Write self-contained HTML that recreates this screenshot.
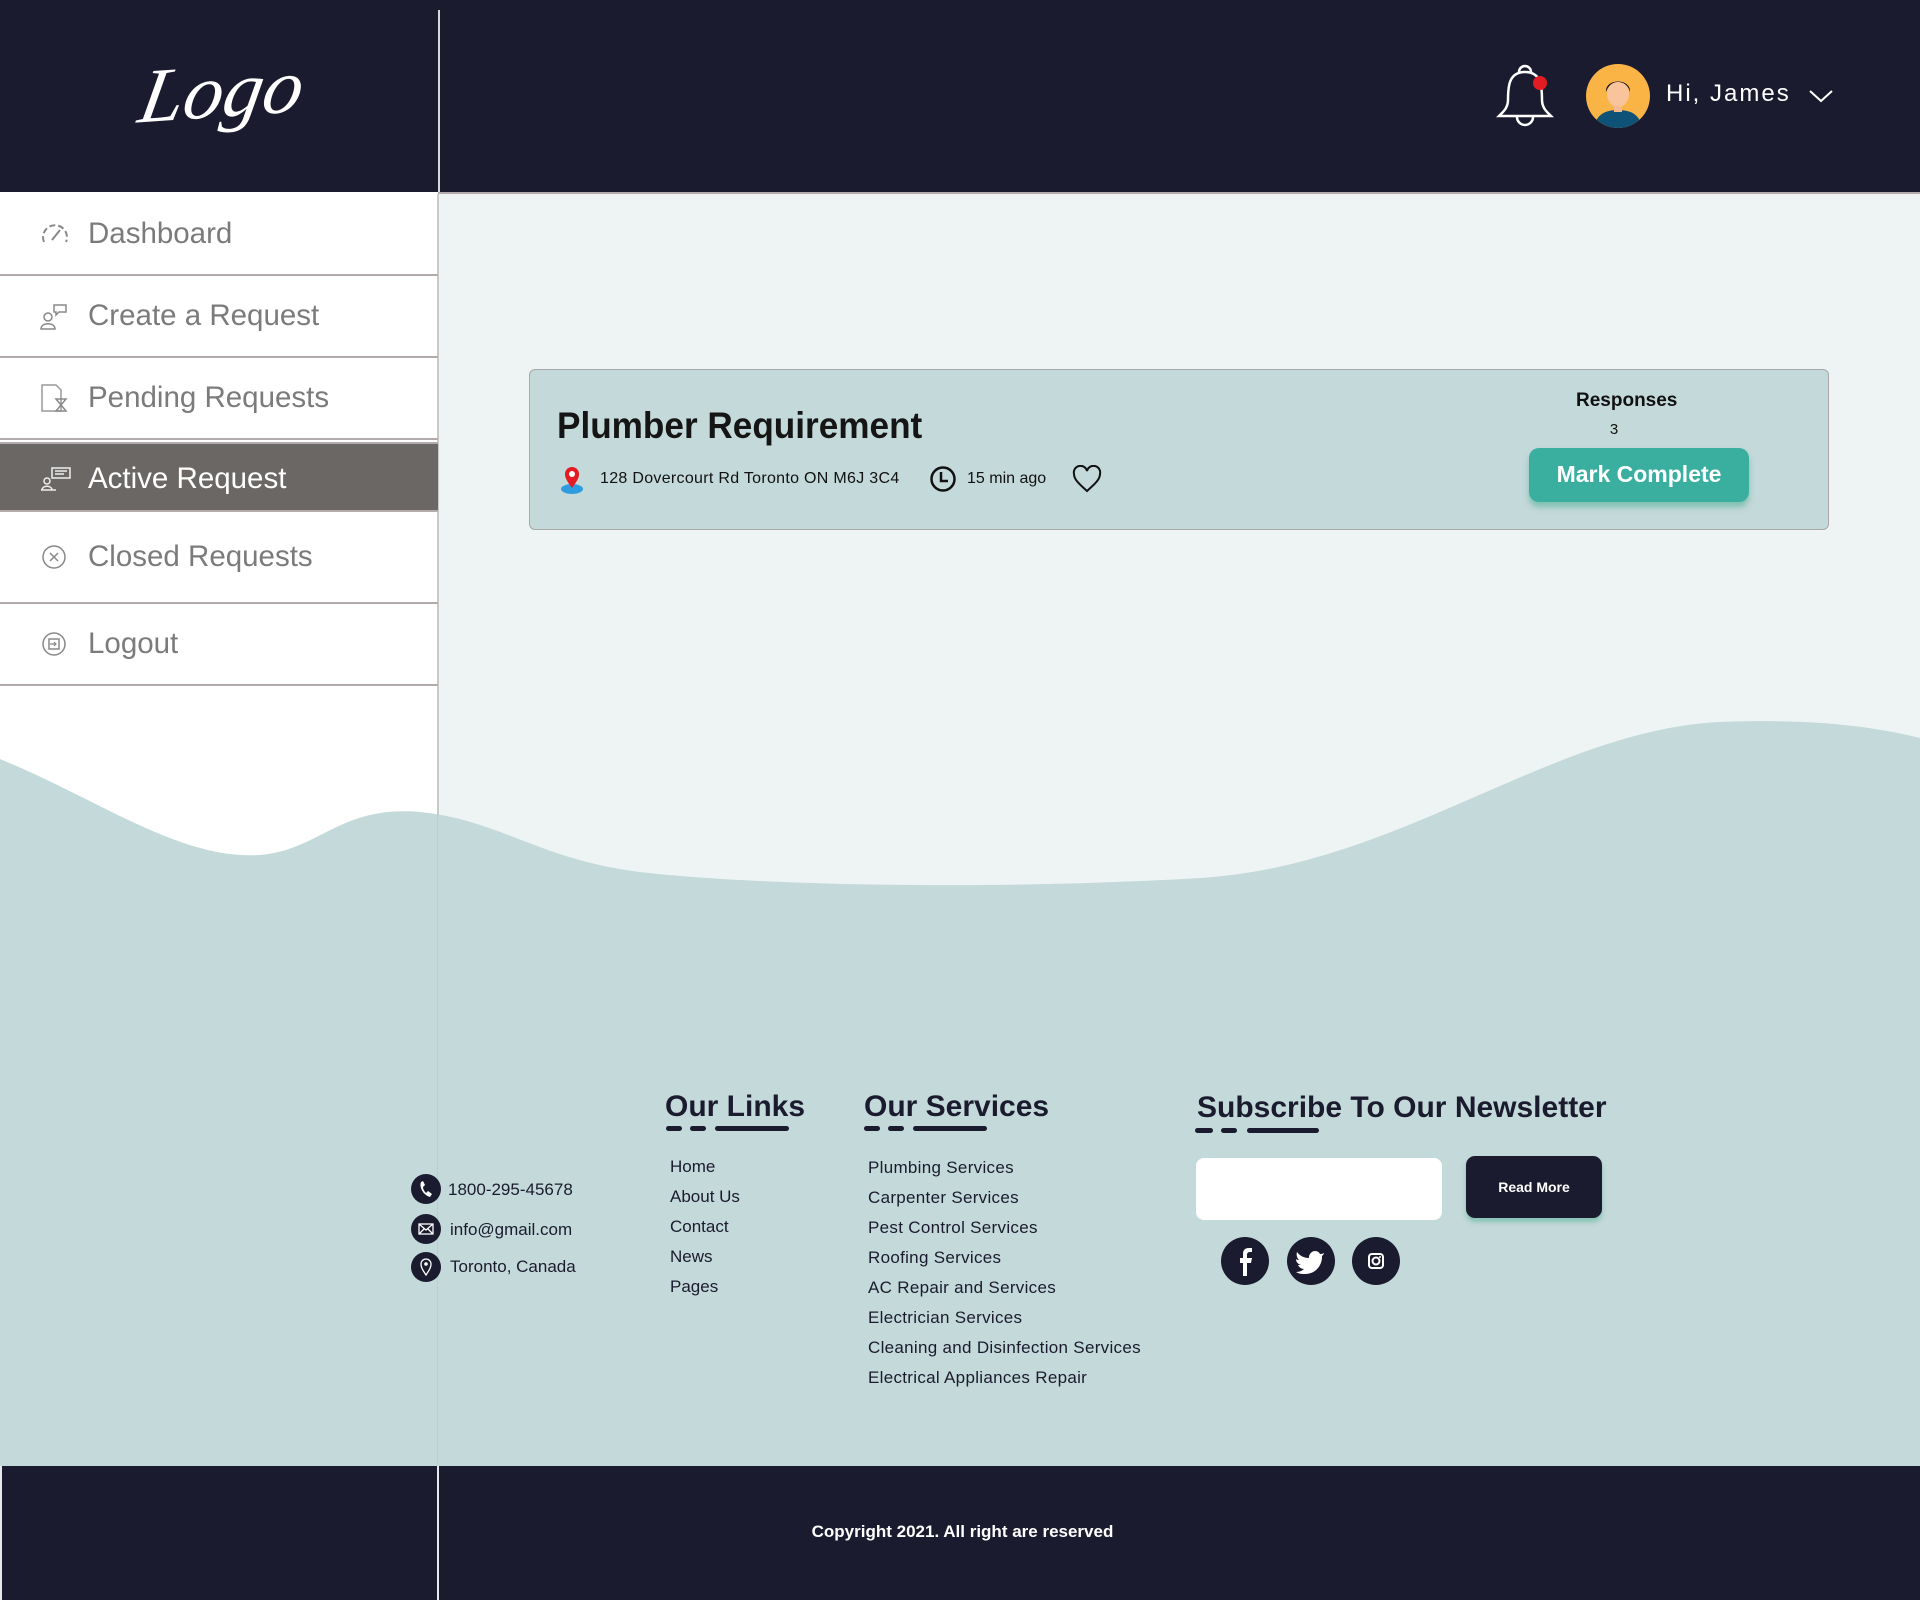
<!DOCTYPE html>
<html><head><meta charset="utf-8">
<style>
*{margin:0;padding:0;box-sizing:border-box}
body{width:1920px;height:1600px;position:relative;overflow:hidden;background:#eef4f3;font-family:"Liberation Sans",sans-serif}
.abs{position:absolute}
#hdr{left:0;top:0;width:1920px;height:192px;background:#1a1b2e}
#side{left:0;top:192px;width:438px;height:700px;background:#fff}
.vl{position:absolute;left:437px;width:2px;background:#c9c9c9}
.item{position:absolute;left:0;width:438px;border-bottom:2px solid #b4acac;color:#7b7b7b;font-size:29.5px;display:flex;align-items:center}
.item span{position:absolute;left:88px}
.item svg{position:absolute;left:40px}
.ft{color:#1a1b2e;font-size:17px;position:absolute}
.h{font-size:30px;font-weight:bold;color:#1a1b2e;position:absolute}
.dash{position:absolute;height:5px;background:#1a1b2e;border-radius:3px}
</style></head><body>
<div id="hdr" class="abs"></div>
<div class="abs" style="left:438px;top:10px;width:2px;height:182px;background:#d8d8d8"></div>
<div class="abs" style="left:0;top:192px;width:1920px;height:2px;background:#b4acac"></div>
<div class="abs" style="left:142px;top:46px;color:#fff;font-family:'URW Chancery L','Z003','Liberation Serif',serif;font-style:italic;font-size:78px;transform:skewX(-14deg) rotate(-4deg)">Logo</div>

<svg class="abs" style="left:1495px;top:62px" width="60" height="70" viewBox="0 0 60 70"><path d="M24 10 a6 6 0 0 1 12 0" fill="none" stroke="#fff" stroke-width="2.5"/><path d="M30 10 C14 10 13 24 13 38 C13 46 8 50 4 54 L56 54 C52 50 47 46 47 38 C47 24 46 10 30 10Z" fill="none" stroke="#fff" stroke-width="2.5"/><path d="M22 55 a8 8 0 0 0 16 0" fill="none" stroke="#fff" stroke-width="2.5"/><circle cx="45" cy="21" r="7" fill="#e31b23"/></svg>
<svg class="abs" style="left:1586px;top:64px" width="64" height="64" viewBox="0 0 64 64"><defs><clipPath id="c"><circle cx="32" cy="32" r="32"/></clipPath></defs><circle cx="32" cy="32" r="32" fill="#f9b445"/><g clip-path="url(#c)"><path d="M8 64 C10 50 20 46 32 46 C44 46 54 50 56 64Z" fill="#0f5278"/><rect x="28" y="38" width="8" height="10" fill="#f5b88f"/><ellipse cx="32" cy="30" rx="11" ry="13" fill="#f9c39b"/><path d="M20 28 C19 14 45 14 44 28 C42 20 36 18 32 18 C26 18 22 22 20 28Z" fill="#111"/></g></svg>
<div class="abs" style="left:1666px;top:80px;color:#fff;font-size:24px;letter-spacing:2px">Hi, James</div>
<svg class="abs" style="left:1808px;top:88px" width="26" height="16"><path d="M2 3 L13 13 L24 3" fill="none" stroke="#fff" stroke-width="2"/></svg>

<div id="side" class="abs"></div>
<div class="vl" style="top:194px;height:1272px"></div>
<div class="item" style="top:194px;height:82px"><svg width="30" height="24" viewBox="0 0 30 24"><path d="M4 20 A12 12 0 1 1 26 20" fill="none" stroke="#888" stroke-width="2" stroke-dasharray="6 3"/><path d="M12 18 L20 8" stroke="#888" stroke-width="2"/></svg><span>Dashboard</span></div>
<div class="item" style="top:276px;height:82px"><svg width="30" height="28" viewBox="0 0 30 28"><circle cx="8" cy="15" r="4" fill="none" stroke="#888" stroke-width="1.5"/><path d="M1 27 C1 20 15 20 15 27Z" fill="none" stroke="#888" stroke-width="1.5"/><path d="M14 3 H26 V10 H19 L16 13 V10 H14Z" fill="none" stroke="#888" stroke-width="1.5"/></svg><span>Create a Request</span></div>
<div class="item" style="top:358px;height:82px"><svg width="30" height="30" viewBox="0 0 30 30"><path d="M2 2 H16 L21 7 V28 H2Z" fill="none" stroke="#999" stroke-width="1.5"/><path d="M16 16 H26 L21 22 L26 28 H16 L21 22Z" fill="none" stroke="#888" stroke-width="1.5"/></svg><span>Pending Requests</span></div>
<div class="item" style="top:442px;height:70px;background:#6b6765;color:#fff;border-top:2px solid #b4acac;padding-top:4px"><svg width="32" height="26" viewBox="0 0 32 26"><path d="M12 2 H30 V12 H12Z" fill="none" stroke="#eee" stroke-width="1.5"/><path d="M15 5 H27 M15 8 H24" stroke="#eee" stroke-width="1.5"/><circle cx="7" cy="15" r="3" fill="none" stroke="#eee" stroke-width="1.5"/><path d="M1 24 H16 M2 24 C2 19 12 19 12 24" fill="none" stroke="#eee" stroke-width="1.5"/></svg><span>Active Request</span></div>
<div class="item" style="top:512px;height:92px"><svg width="28" height="28"><circle cx="14" cy="14" r="11" fill="none" stroke="#888" stroke-width="1.5"/><path d="M10 10 L18 18 M18 10 L10 18" stroke="#888" stroke-width="1.5"/></svg><span>Closed Requests</span></div>
<div class="item" style="top:604px;height:82px"><svg width="28" height="28"><circle cx="14" cy="14" r="11" fill="none" stroke="#888" stroke-width="1.5"/><rect x="9" y="9" width="10" height="10" fill="none" stroke="#888" stroke-width="1.5"/><path d="M10 14 H16 M14 12 L16 14 L14 16" fill="none" stroke="#888" stroke-width="1.2"/></svg><span>Logout</span></div>

<div class="abs" style="left:529px;top:369px;width:1300px;height:161px;background:#c4d9d9;border:1px solid #a8a8a8;border-radius:6px"></div>
<div class="abs" style="left:557px;top:405px;font-size:37px;font-weight:bold;color:#151515;transform:scaleX(.95);transform-origin:left">Plumber Requirement</div>
<svg class="abs" style="left:558px;top:464px" width="28" height="30" viewBox="0 0 28 30"><ellipse cx="14" cy="25" rx="11" ry="5" fill="#2e9de0"/><path d="M14 24 C8 16 7 13 7 10 A7 7 0 0 1 21 10 C21 13 20 16 14 24Z" fill="#e31b23"/><circle cx="14" cy="10" r="3" fill="#fff"/></svg>
<div class="abs" style="left:600px;top:470px;font-size:16px;color:#111;letter-spacing:.3px">128 Dovercourt Rd Toronto ON M6J 3C4</div>
<svg class="abs" style="left:929px;top:465px" width="28" height="28"><circle cx="14" cy="14" r="11.5" fill="none" stroke="#111" stroke-width="2.5"/><path d="M12 7 V16 H19" fill="none" stroke="#111" stroke-width="2.5"/></svg>
<div class="abs" style="left:967px;top:470px;font-size:16px;color:#111">15 min ago</div>
<svg class="abs" style="left:1072px;top:465px" width="30" height="28" viewBox="0 0 30 28"><path d="M15 26 C6 18 2 14 2 9 A6.5 6.5 0 0 1 15 6 A6.5 6.5 0 0 1 28 9 C28 14 24 18 15 26Z" fill="none" stroke="#111" stroke-width="2"/></svg>
<div class="abs" style="left:1576px;top:390px;width:100px;text-align:center;font-size:19px;font-weight:bold;color:#111">Responses</div>
<div class="abs" style="left:1606px;top:421px;width:16px;text-align:center;font-size:15px;color:#111">3</div>
<div class="abs" style="left:1529px;top:448px;width:220px;height:54px;background:#3aaf9f;border-radius:10px;box-shadow:0 5px 6px rgba(60,170,140,.5);color:#fff;font-size:23px;font-weight:bold;text-align:center;line-height:52px">Mark Complete</div>

<svg class="abs" style="left:0;top:700px" width="1920" height="770" viewBox="0 700 1920 770"><path d="M0 759 C100 800 180 860 260 855 C320 850 340 805 420 812 C500 820 540 860 640 872 C760 886 1000 890 1200 878 C1400 866 1550 730 1720 722 C1820 718 1880 728 1920 738 L1920 1470 L0 1470Z" fill="#c4d9d9"/></svg>
<div class="vl" style="top:810px;height:660px;background:#bccfcf;width:1px"></div>

<svg class="abs" style="left:410px;top:1173px" width="32" height="32"><circle cx="16" cy="16" r="15" fill="#1a1b2e"/><path d="M11 9 C9 14 13 22 20 24 L22 21 L18 18 L16 20 C14 18 13 16 13 14 L15 12 L13 8Z" fill="#fff"/></svg>
<div class="ft" style="left:448px;top:1180px">1800-295-45678</div>
<svg class="abs" style="left:410px;top:1213px" width="32" height="32"><circle cx="16" cy="16" r="15" fill="#1a1b2e"/><rect x="9" y="11" width="14" height="10" fill="none" stroke="#fff" stroke-width="1.3"/><path d="M9 11 L16 17 L23 11 M9 21 L14 16 M23 21 L18 16" fill="none" stroke="#fff" stroke-width="1.3"/></svg>
<div class="ft" style="left:450px;top:1220px">info@gmail.com</div>
<svg class="abs" style="left:410px;top:1251px" width="32" height="32"><circle cx="16" cy="16" r="15" fill="#1a1b2e"/><path d="M16 24 C12 18 11 16 11 13 A5 5 0 0 1 21 13 C21 16 20 18 16 24Z" fill="none" stroke="#fff" stroke-width="1.3"/><circle cx="16" cy="13" r="1.8" fill="#fff"/></svg>
<div class="ft" style="left:450px;top:1257px">Toronto, Canada</div>

<div class="h" style="left:665px;top:1090px">Our Links</div>
<div class="dash" style="left:666px;top:1126px;width:16px"></div><div class="dash" style="left:690px;top:1126px;width:16px"></div><div class="dash" style="left:715px;top:1126px;width:74px"></div>
<div class="ft" style="left:670px;top:1157px">Home</div>
<div class="ft" style="left:670px;top:1187px">About Us</div>
<div class="ft" style="left:670px;top:1217px">Contact</div>
<div class="ft" style="left:670px;top:1247px">News</div>
<div class="ft" style="left:670px;top:1277px">Pages</div>

<div class="h" style="left:864px;top:1090px">Our Services</div>
<div class="dash" style="left:864px;top:1126px;width:16px"></div><div class="dash" style="left:888px;top:1126px;width:16px"></div><div class="dash" style="left:913px;top:1126px;width:74px"></div>
<div style="letter-spacing:.3px">
<div class="ft" style="left:868px;top:1158px">Plumbing Services</div>
<div class="ft" style="left:868px;top:1188px">Carpenter Services</div>
<div class="ft" style="left:868px;top:1218px">Pest Control Services</div>
<div class="ft" style="left:868px;top:1248px">Roofing Services</div>
<div class="ft" style="left:868px;top:1278px">AC Repair and Services</div>
<div class="ft" style="left:868px;top:1308px">Electrician Services</div>
<div class="ft" style="left:868px;top:1338px">Cleaning and Disinfection Services</div>
<div class="ft" style="left:868px;top:1368px">Electrical Appliances Repair</div>
</div>

<div class="h" style="left:1197px;top:1091px">Subscribe To Our Newsletter</div>
<div class="dash" style="left:1195px;top:1128px;width:18px"></div><div class="dash" style="left:1221px;top:1128px;width:16px"></div><div class="dash" style="left:1247px;top:1128px;width:72px"></div>
<div class="abs" style="left:1196px;top:1158px;width:246px;height:62px;background:#fff;border-radius:8px"></div>
<div class="abs" style="left:1466px;top:1156px;width:136px;height:62px;background:#1a1b2e;border-radius:9px;box-shadow:0 4px 5px rgba(60,170,140,.45);color:#fff;font-size:14px;font-weight:bold;text-align:center;line-height:62px">Read More</div>
<svg class="abs" style="left:1220px;top:1236px" width="180" height="52"><circle cx="25" cy="25" r="24" fill="#1a1b2e"/><path d="M27 40 V27 H31 L32 22 H27 V19 C27 17 28 16 30 16 H32 V12 H29 C25 12 23 14 23 18 V22 H20 V27 H23 V40Z" fill="#fff"/><circle cx="91" cy="25" r="24" fill="#1a1b2e"/><path d="M104 17 C102 18 101 18 100 18 C99 16 97 15 95 15 C92 15 89 18 89 21 V22 C84 22 80 20 77 16 C76 19 77 22 79 24 C78 24 77 24 76 23 C76 26 78 28 81 29 C80 29 79 29 78 29 C79 31 81 33 84 33 C82 35 79 36 76 36 C79 38 82 38 85 38 C96 38 102 29 102 21 V20 C103 19 104 18 104 17Z" fill="#fff"/><circle cx="156" cy="25" r="24" fill="#1a1b2e"/><rect x="149" y="18" width="14" height="14" rx="3" fill="none" stroke="#fff" stroke-width="2"/><circle cx="156" cy="25" r="3.5" fill="none" stroke="#fff" stroke-width="2"/><circle cx="160" cy="21" r="1" fill="#fff"/></svg>

<div class="abs" style="left:0;top:1466px;width:1920px;height:134px;background:#1a1b2e"></div>
<div class="abs" style="left:437px;top:1466px;width:2px;height:134px;background:#e8e8e8"></div>
<div class="abs" style="left:0;top:1466px;width:2px;height:134px;background:#e8e8e8"></div>
<div class="abs" style="left:700px;top:1522px;width:525px;text-align:center;color:#fff;font-size:17px;font-weight:bold">Copyright 2021. All right are reserved</div>
</body></html>
